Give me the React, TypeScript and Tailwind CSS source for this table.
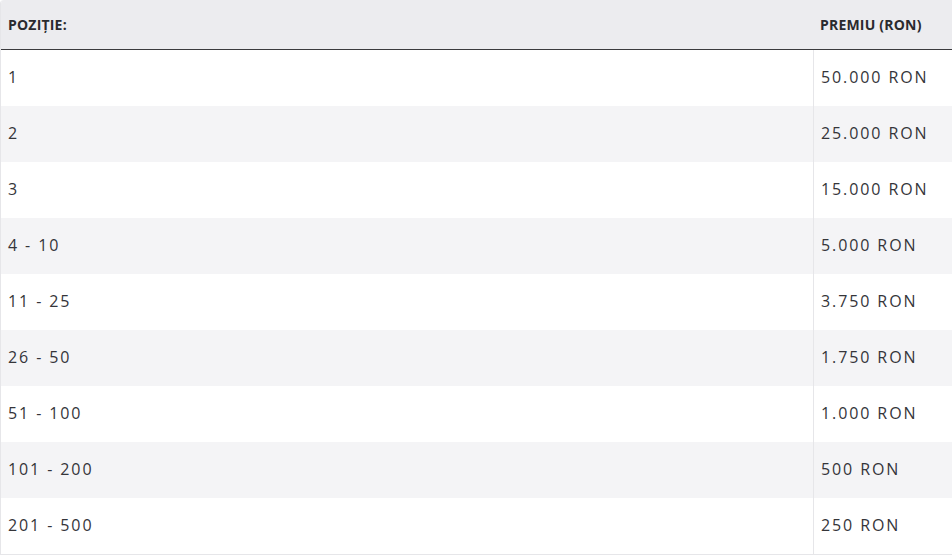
import React from "react";

const rows: [string, string][] = [
  ["1", "50.000 RON"],
  ["2", "25.000 RON"],
  ["3", "15.000 RON"],
  ["4 - 10", "5.000 RON"],
  ["11 - 25", "3.750 RON"],
  ["26 - 50", "1.750 RON"],
  ["51 - 100", "1.000 RON"],
  ["101 - 200", "500 RON"],
  ["201 - 500", "250 RON"],
];

export default function App() {
  return (
    <div className="w-[952px] h-[556px] bg-white" style={{ fontFamily: '"Open Sans", sans-serif' }}>
      <div className="border-l border-b border-[#e6e6e9] rounded-tl-[4px] overflow-hidden">
        <div className="flex h-[50px] bg-[#ececef] border-b border-[#3a3a3d] text-[14px] font-bold text-[#2a2a2e] tracking-[0.2px]">
          <div className="flex-1 flex items-center pl-[7px]">POZIȚIE:</div>
          <div className="w-[139px] flex items-center pl-[7px]">PREMIU (RON)</div>
        </div>
        {rows.map(([p, v], i) => (
          <div
            key={i}
            className={`flex h-[56px] text-[16px] tracking-[1.9px] text-[#35353a] ${i % 2 === 1 ? "bg-[#f4f4f6]" : "bg-white"}`}
          >
            <div className="flex-1 flex items-center pl-[7px] pb-[2px]">{p}</div>
            <div className="w-[139px] flex items-center pl-[7px] pb-[2px] border-l border-[#e6e6e9]">{v}</div>
          </div>
        ))}
      </div>
    </div>
  );
}
